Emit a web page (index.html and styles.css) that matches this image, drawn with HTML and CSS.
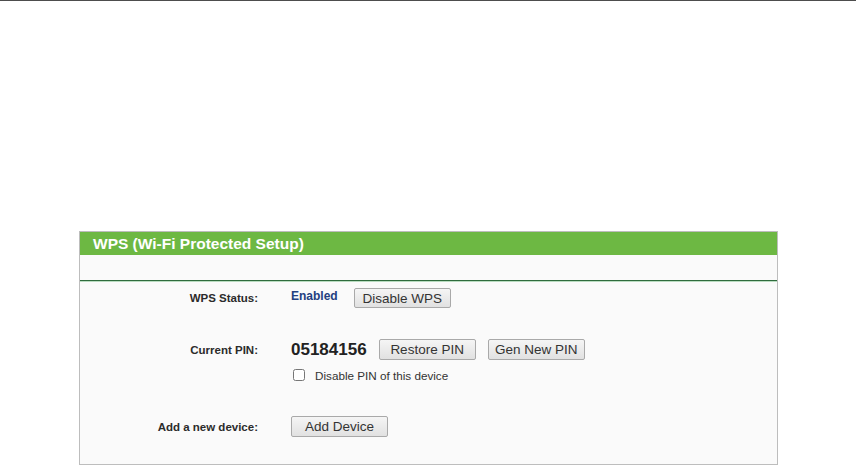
FILE: index.html
```html
<!DOCTYPE html>
<html lang="en">
<head>
    <meta charset="UTF-8">
    <meta name="viewport" content="width=device-width, initial-scale=1.0">
    <title>WPS (Wi-Fi Protected Setup)</title>
    <link rel="stylesheet" href="styles.css">
</head>
<body>
    <div class="topline"></div>

    <div class="panel">
        <div class="panel-title">WPS (Wi-Fi Protected Setup)</div>
        <div class="panel-sub"></div>

        <div class="panel-body">
            <div class="row row-status">
                <label class="label">WPS Status:</label>
                <div class="value">
                    <span class="status">Enabled</span>
                    <button class="btn">Disable WPS</button>
                </div>
            </div>

            <div class="row row-pin">
                <label class="label">Current PIN:</label>
                <div class="value">
                    <span class="pin">05184156</span>
                    <button class="btn">Restore PIN</button>
                    <button class="btn">Gen New PIN</button>
                </div>
            </div>

            <div class="row row-check">
                <div class="label"></div>
                <div class="value">
                    <input type="checkbox" id="disablePin">
                    <label for="disablePin" class="check-text">Disable PIN of this device</label>
                </div>
            </div>

            <div class="row row-add">
                <label class="label">Add a new device:</label>
                <div class="value">
                    <button class="btn">Add Device</button>
                </div>
            </div>
        </div>
    </div>
</body>
</html>
```

FILE: styles.css
```css
body {
    margin: 0;
    font-family: "Liberation Sans", Arial, sans-serif;
    background-color: #fff;
    color: #333;
}
.topline {
    height: 1px;
    background-color: #4d4d4d;
}
.panel {
    margin: 230px 0 0 79px;
    width: 697px;
    border: 1px solid #bdbdbd;
    background-color: #fafafa;
}
.panel-title {
    height: 23px;
    line-height: 23px;
    padding-left: 13px;
    background-color: #6db843;
    color: #fff;
    font-size: 15.5px;
    font-weight: bold;
}
.panel-sub {
    height: 25px;
    border-bottom: 1px solid #2f6b3d;
    box-shadow: 0 1px 0 #b9dcc0;
}
.panel-body {
    padding: 7px 0 27px;
}
.row {
    display: flex;
    align-items: center;
}
.label {
    width: 178px;
    text-align: right;
    font-size: 11.5px;
    font-weight: bold;
    color: #2b2b2b;
}
.value {
    display: flex;
    align-items: center;
    margin-left: 33px;
}
.row-status {
    height: 20px;
}
.row-pin {
    height: 21px;
    margin-top: 31px;
}
.row-check {
    height: 14px;
    margin-top: 8px;
}
.row-add {
    height: 21px;
    margin-top: 34px;
}
.status {
    font-size: 12px;
    font-weight: bold;
    color: #23407f;
    margin-right: 16px;
    position: relative;
    top: -2px;
}
.pin {
    font-size: 17px;
    font-weight: bold;
    color: #222;
    margin-right: 12px;
}
.btn {
    box-sizing: border-box;
    height: 20px;
    width: 97px;
    padding: 0;
    margin-right: 12px;
    font-family: "Liberation Sans", Arial, sans-serif;
    font-size: 13.5px;
    color: #333;
    background: linear-gradient(#f5f5f5, #e1e1e1);
    border: 1px solid #a9a9a9;
    border-radius: 2px;
}
.row-pin .btn,
.row-add .btn {
    height: 21px;
}
input[type="checkbox"] {
    width: 12px;
    height: 12px;
    margin: 0 10px 0 2px;
}
.check-text {
    font-size: 11.7px;
    color: #333;
}
```
